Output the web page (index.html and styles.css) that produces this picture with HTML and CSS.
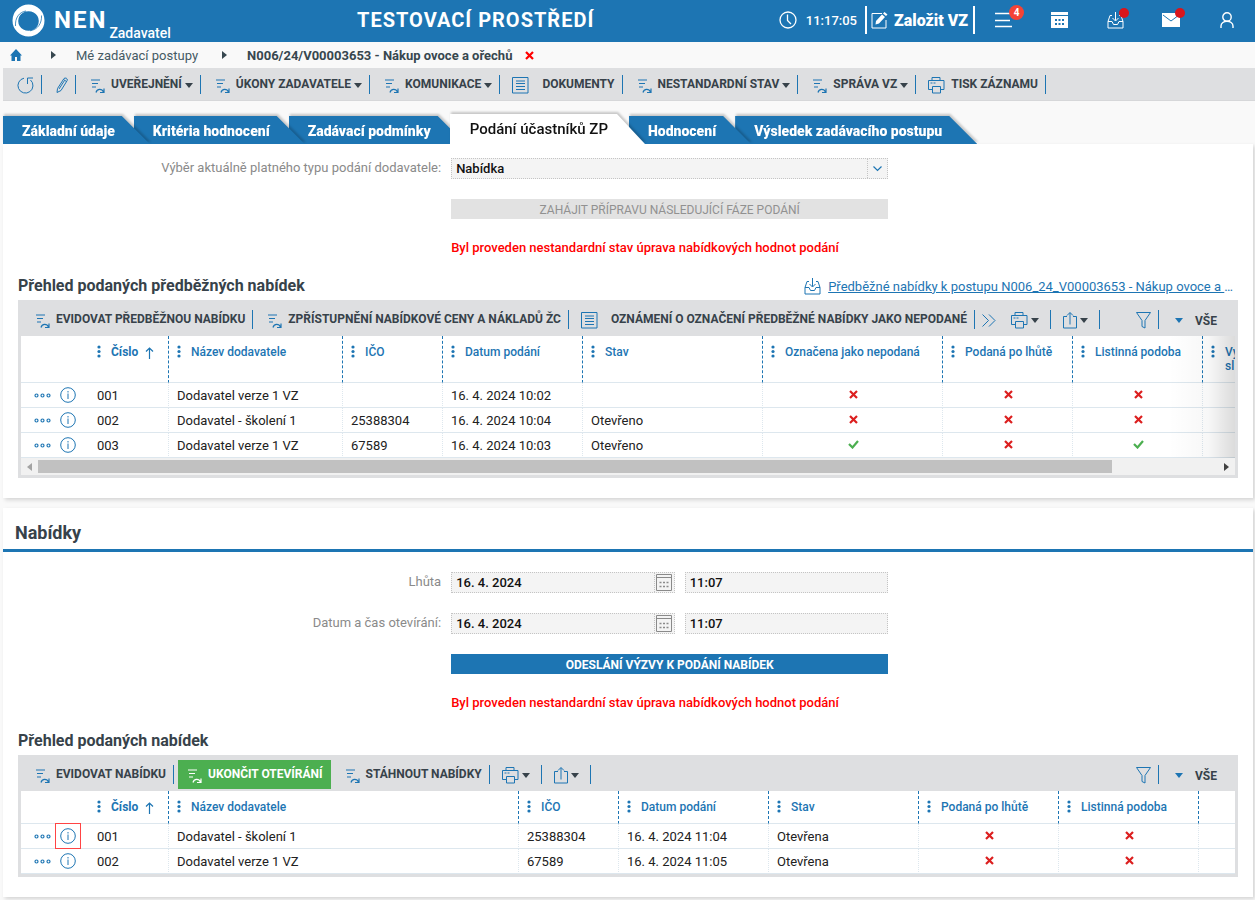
FILE: index.html
```html
<!DOCTYPE html>
<html lang="cs">
<head>
    <meta charset="UTF-8">
    <meta name="viewport" content="width=device-width, initial-scale=1.0">
    <title>NEN - Podání účastníků ZP</title>
    <link rel="stylesheet" href="styles.css">
</head>
<body>
    <!-- Icon sprite -->
    <svg class="sprite" aria-hidden="true">
        <symbol id="i-logo" viewBox="0 0 33 33">
            <path fill="currentColor" fill-rule="evenodd" d="M16.500 0.500a16 16 0 1 1 0 32a16 16 0 1 1 0-32zM16.500 7.200a10.300 9.800 0 1 0 .01 0z"/>
            <path fill="none" stroke="#1d75b3" stroke-width=".8" d="M3.500 22C3 14 7 8 14 7M29.500 11.500C30 19 26 25.500 18 26.800"/>
        </symbol>
        <symbol id="i-clock" viewBox="0 0 18 18">
            <g fill="none" stroke="currentColor" stroke-width="1.3"><circle cx="9" cy="9" r="8"/><path d="M8.500 3.500v6l3.500 3.500"/></g>
        </symbol>
        <symbol id="i-edit" viewBox="0 0 17 17">
            <path fill="none" stroke="currentColor" d="M11 1.500H1v14.500h14V8"/>
            <path fill="currentColor" d="M5 9l6-6.500 3 2.500-6 6.500-3.500 1zM12 1.500l1.500-1.500 3 2.500-1.500 1.500z"/>
        </symbol>
        <symbol id="i-menu" viewBox="0 0 17 16">
            <path fill="none" stroke="currentColor" stroke-width="1.500" d="M0 1.500h17M0 8.500h15M0 14.500h17"/>
        </symbol>
        <symbol id="i-cal-solid" viewBox="0 0 17 16">
            <path fill="currentColor" d="M0 0h17v3H0zM0 4h17v12H0z"/>
            <path stroke="#1d75b3" stroke-width="2" stroke-dasharray="2 1.500" d="M4 8h9M4 12h9"/>
        </symbol>
        <symbol id="i-inbox" viewBox="0 0 17 17">
            <path fill="none" stroke="currentColor" d="M5 3.500H3L1 9.500v6.500h15V9.500L14 3.500h-2M1 9.500h4l1.500 3h4l1.500-3h4M8.500 0v8.500M5.500 6l3 3 3-3"/>
        </symbol>
        <symbol id="i-mail" viewBox="0 0 18 14">
            <path fill="currentColor" d="M0 0h18v14H0z"/><path fill="none" stroke="#1d75b3" d="M1 2l8 6 8-6"/>
        </symbol>
        <symbol id="i-user" viewBox="0 0 14 16">
            <g fill="none" stroke="currentColor" stroke-width="1.400"><circle cx="7" cy="5" r="4.200"/><path d="M1 16v-2c0-3 3-4.800 6-4.800s6 1.800 6 4.800v2"/></g>
        </symbol>
        <symbol id="i-home" viewBox="0 0 12 12">
            <path fill="currentColor" d="M6 0l6 6.500h-1.500V12H7V8H5v4H1.500V6.500H0z"/>
        </symbol>
        <symbol id="i-cross" viewBox="0 0 9 9">
            <path fill="none" stroke="currentColor" stroke-width="2.200" d="M1 1l7 7M8 1L1 8"/>
        </symbol>
        <symbol id="i-check" viewBox="0 0 11 9">
            <path fill="none" stroke="currentColor" stroke-width="2.200" d="M1 4l3.500 3.500L10 1"/>
        </symbol>
        <symbol id="i-refresh" viewBox="0 0 17 17">
            <path fill="none" stroke="currentColor" d="M7 1.200A7.500 7.500 0 1 0 13.500 3M16 1h-5.500v6"/>
        </symbol>
        <symbol id="i-pencil" viewBox="0 0 12 17">
            <path fill="none" stroke="currentColor" d="M1 15.500l.5-4L8 1.500c1-1 4-.5 3.200 2L5 13.500zM3 12l5.500-8.500M7.500 2.500l3 2"/>
        </symbol>
        <symbol id="i-action" viewBox="0 0 14 14">
            <path fill="none" stroke="currentColor" stroke-width="1.200" d="M0 1h9M1 4.500h6M1 8h4M5 13.500c1-4 6-4 7.500-.5M13 9.500v4H9"/>
        </symbol>
        <symbol id="i-doc" viewBox="0 0 17 17">
            <path fill="none" stroke="currentColor" d="M.5.500h15.500v15.500H.5zM4 4h9M4 6.500h9M4 9.500h9M4 12.500h9"/>
        </symbol>
        <symbol id="i-print" viewBox="0 0 17 17">
            <path fill="none" stroke="currentColor" d="M4 3.500V.5h8v3M4 12.500H.5v-9H16v9h-3.500M4.500 9.500h8v6.500h-8zM2.500 6h2M5.500 6h2"/>
        </symbol>
        <symbol id="i-share" viewBox="0 0 14 17">
            <path fill="none" stroke="currentColor" d="M4 4.500H.5v11.500h13V4.500H10M7 12.500V.8M4 3.500l3-3 3 3"/>
        </symbol>
        <symbol id="i-filter" viewBox="0 0 15 17">
            <path fill="none" stroke="currentColor" d="M.5.500h14L9 8.500v7.500l-3-1.500v-6z"/>
        </symbol>
        <symbol id="i-more" viewBox="0 0 14 13">
            <path fill="none" stroke="currentColor" d="M.5.500l6 6-6 6M7 .5l6 6-6 6"/>
        </symbol>
        <symbol id="i-caret" viewBox="0 0 8 5"><path fill="currentColor" d="M0 0h8L4 5z"/></symbol>
        <symbol id="i-right" viewBox="0 0 5 8"><path fill="currentColor" d="M0 0l5 4-5 4z"/></symbol>
        <symbol id="i-left" viewBox="0 0 5 8"><path fill="currentColor" d="M5 0L0 4l5 4z"/></symbol>
        <symbol id="i-chevron" viewBox="0 0 9 6"><path fill="none" stroke="currentColor" stroke-width="1.200" d="M.5.500l4 4 4-4"/></symbol>
        <symbol id="i-grip" viewBox="0 0 4 13">
            <g fill="currentColor"><circle cx="2" cy="2" r="1.600"/><circle cx="2" cy="6.500" r="1.600"/><circle cx="2" cy="11" r="1.600"/></g>
        </symbol>
        <symbol id="i-up" viewBox="0 0 9 12"><path fill="none" stroke="currentColor" stroke-width="1.200" d="M4.500 12V1M1 4.500L4.500 1 8 4.500"/></symbol>
        <symbol id="i-dots" viewBox="0 0 17 5">
            <g fill="none" stroke="currentColor" stroke-width="1.200"><circle cx="2.500" cy="2.500" r="1.500"/><circle cx="8.500" cy="2.500" r="1.500"/><circle cx="14.500" cy="2.500" r="1.500"/></g>
        </symbol>
        <symbol id="i-info" viewBox="0 0 16 16">
            <circle cx="8" cy="8" r="7.300" fill="none" stroke="currentColor"/><path stroke="currentColor" d="M8 4v1.500M8 6.500v5.500"/>
        </symbol>
        <symbol id="i-cal" viewBox="0 0 16 17">
            <path fill="none" stroke="currentColor" d="M.5.500h15v16H.5zM.5 3.500h15"/>
            <path stroke="currentColor" stroke-width="1.500" stroke-dasharray="2 1.500" d="M3.500 8.500h9M3.500 12.500h9"/>
        </symbol>
    </svg>

    <header class="header">
        <div class="brand">
            <svg class="logo"><use href="#i-logo"/></svg>
            <span class="brand-name">NEN</span>
            <span class="brand-role">Zadavatel</span>
        </div>
        <div class="env">TESTOVACÍ PROSTŘEDÍ</div>
        <div class="clock"><svg width="18" height="18"><use href="#i-clock"/></svg>11:17:05</div>
        <button class="create"><svg width="17" height="17"><use href="#i-edit"/></svg>Založit VZ</button>
        <nav class="header-icons">
            <button aria-label="Nabídka"><svg width="17" height="16"><use href="#i-menu"/></svg><span class="badge">4</span></button>
            <button aria-label="Kalendář"><svg width="17" height="16"><use href="#i-cal-solid"/></svg></button>
            <button aria-label="Doručené"><svg width="17" height="17"><use href="#i-inbox"/></svg><span class="dot"></span></button>
            <button aria-label="Zprávy"><svg width="18" height="14"><use href="#i-mail"/></svg><span class="dot"></span></button>
            <button aria-label="Uživatel"><svg width="14" height="16"><use href="#i-user"/></svg></button>
        </nav>
    </header>

    <nav class="breadcrumb">
        <a class="home" href="#" aria-label="Domů"><svg width="12" height="12"><use href="#i-home"/></svg></a>
        <svg class="sep" width="5" height="8"><use href="#i-right"/></svg>
        <a href="#">Mé zadávací postupy</a>
        <svg class="sep" width="5" height="8"><use href="#i-right"/></svg>
        <strong>N006/24/V00003653 - Nákup ovoce a ořechů</strong>
        <button class="close" aria-label="Zavřít"><svg width="9" height="9"><use href="#i-cross"/></svg></button>
    </nav>

    <div class="toolbar main-toolbar">
        <button class="tool icon-only" aria-label="Obnovit"><svg width="17" height="17"><use href="#i-refresh"/></svg></button>
        <button class="tool icon-only" aria-label="Upravit"><svg width="12" height="17"><use href="#i-pencil"/></svg></button>
        <button class="tool"><svg width="14" height="14"><use href="#i-action"/></svg>UVEŘEJNĚNÍ<svg class="caret"><use href="#i-caret"/></svg></button>
        <button class="tool"><svg width="14" height="14"><use href="#i-action"/></svg>ÚKONY ZADAVATELE<svg class="caret"><use href="#i-caret"/></svg></button>
        <button class="tool"><svg width="14" height="14"><use href="#i-action"/></svg>KOMUNIKACE<svg class="caret"><use href="#i-caret"/></svg></button>
        <button class="tool doc"><svg width="17" height="17"><use href="#i-doc"/></svg>DOKUMENTY</button>
        <button class="tool"><svg width="14" height="14"><use href="#i-action"/></svg>NESTANDARDNÍ STAV<svg class="caret"><use href="#i-caret"/></svg></button>
        <button class="tool"><svg width="14" height="14"><use href="#i-action"/></svg>SPRÁVA VZ<svg class="caret"><use href="#i-caret"/></svg></button>
        <button class="tool print"><svg width="17" height="17"><use href="#i-print"/></svg>TISK ZÁZNAMU</button>
    </div>

    <ul class="tabs">
        <li><a href="#">Základní údaje</a></li>
        <li><a href="#">Kritéria hodnocení</a></li>
        <li><a href="#">Zadávací podmínky</a></li>
        <li class="active"><a href="#">Podání účastníků ZP</a></li>
        <li><a href="#">Hodnocení</a></li>
        <li><a href="#">Výsledek zadávacího postupu</a></li>
    </ul>

    <section class="panel first">
        <div class="form">
            <label for="typ">Výběr aktuálně platného typu podání dodavatele:</label>
            <div class="field select-field">
                <select id="typ"><option>Nabídka</option></select>
                <span class="field-icon"><svg width="9" height="6"><use href="#i-chevron"/></svg></span>
            </div>
            <button class="wide" disabled>ZAHÁJIT PŘÍPRAVU NÁSLEDUJÍCÍ FÁZE PODÁNÍ</button>
            <p class="alert">Byl proveden nestandardní stav úprava nabídkových hodnot podání</p>
        </div>

        <div class="block-head">
            <h3>Přehled podaných předběžných nabídek</h3>
            <a class="download" href="#"><svg width="17" height="17"><use href="#i-inbox"/></svg><span><u>Předběžné nabídky k postupu N006_24_V00003653 - Nákup ovoce a </u>…</span></a>
        </div>
        <div class="grid">
            <div class="toolbar">
                <button class="tool"><svg width="14" height="14"><use href="#i-action"/></svg>EVIDOVAT PŘEDBĚŽNOU NABÍDKU</button>
                <button class="tool"><svg width="14" height="14"><use href="#i-action"/></svg>ZPŘÍSTUPNĚNÍ NABÍDKOVÉ CENY A NÁKLADŮ ŽC</button>
                <button class="tool doc"><svg width="17" height="17"><use href="#i-doc"/></svg>OZNÁMENÍ O OZNAČENÍ PŘEDBĚŽNÉ NABÍDKY JAKO NEPODANÉ</button>
                <button class="tool more" aria-label="Další"><svg width="14" height="13"><use href="#i-more"/></svg></button>
                <button class="tool menu" aria-label="Tisk"><svg width="17" height="17"><use href="#i-print"/></svg><svg class="caret"><use href="#i-caret"/></svg></button>
                <button class="tool menu" aria-label="Export"><svg width="14" height="17"><use href="#i-share"/></svg><svg class="caret"><use href="#i-caret"/></svg></button>
                <div class="filters">
                    <button class="tool filter" aria-label="Filtr"><svg width="15" height="17"><use href="#i-filter"/></svg></button>
                    <button class="all"><svg class="caret"><use href="#i-caret"/></svg>VŠE</button>
                </div>
            </div>
            <div class="table-wrap fade">
                <table class="wide-table">
                    <colgroup><col class="c68"><col class="c80"><col class="c174"><col class="c100"><col class="c140"><col class="c180"><col class="c180"><col class="c130"><col class="c130"><col class="c140"></colgroup>
                    <thead class="tall">
                        <tr>
                            <th class="plain"></th>
                            <th><svg class="grip"><use href="#i-grip"/></svg><b>Číslo</b><svg class="up"><use href="#i-up"/></svg></th>
                            <th><svg class="grip"><use href="#i-grip"/></svg>Název dodavatele</th>
                            <th><svg class="grip"><use href="#i-grip"/></svg>IČO</th>
                            <th><svg class="grip"><use href="#i-grip"/></svg>Datum podání</th>
                            <th><svg class="grip"><use href="#i-grip"/></svg>Stav</th>
                            <th><svg class="grip"><use href="#i-grip"/></svg>Označena jako nepodaná</th>
                            <th><svg class="grip"><use href="#i-grip"/></svg>Podaná po lhůtě</th>
                            <th><svg class="grip"><use href="#i-grip"/></svg>Listinná podoba</th>
                            <th><svg class="grip"><use href="#i-grip"/></svg>Vy<br>sl</th>
                        </tr>
                    </thead>
                    <tbody>
                        <tr>
                            <td class="actions"><button aria-label="Akce"><svg width="17" height="5"><use href="#i-dots"/></svg></button><button aria-label="Detail"><svg width="16" height="16"><use href="#i-info"/></svg></button></td>
                            <td>001</td><td>Dodavatel verze 1 VZ</td><td></td><td>16. 4. 2024 10:02</td><td></td>
                            <td class="flag"><svg class="no"><use href="#i-cross"/></svg></td>
                            <td class="flag"><svg class="no"><use href="#i-cross"/></svg></td>
                            <td class="flag"><svg class="no"><use href="#i-cross"/></svg></td>
                            <td></td>
                        </tr>
                        <tr>
                            <td class="actions"><button aria-label="Akce"><svg width="17" height="5"><use href="#i-dots"/></svg></button><button aria-label="Detail"><svg width="16" height="16"><use href="#i-info"/></svg></button></td>
                            <td>002</td><td>Dodavatel - školení 1</td><td>25388304</td><td>16. 4. 2024 10:04</td><td>Otevřeno</td>
                            <td class="flag"><svg class="no"><use href="#i-cross"/></svg></td>
                            <td class="flag"><svg class="no"><use href="#i-cross"/></svg></td>
                            <td class="flag"><svg class="no"><use href="#i-cross"/></svg></td>
                            <td></td>
                        </tr>
                        <tr>
                            <td class="actions"><button aria-label="Akce"><svg width="17" height="5"><use href="#i-dots"/></svg></button><button aria-label="Detail"><svg width="16" height="16"><use href="#i-info"/></svg></button></td>
                            <td>003</td><td>Dodavatel verze 1 VZ</td><td>67589</td><td>16. 4. 2024 10:03</td><td>Otevřeno</td>
                            <td class="flag"><svg class="yes"><use href="#i-check"/></svg></td>
                            <td class="flag"><svg class="no"><use href="#i-cross"/></svg></td>
                            <td class="flag"><svg class="yes"><use href="#i-check"/></svg></td>
                            <td></td>
                        </tr>
                    </tbody>
                </table>
            </div>
            <div class="scrollbar">
                <svg class="off" width="5" height="8"><use href="#i-left"/></svg>
                <div class="track"><div class="thumb"></div></div>
                <svg width="5" height="8"><use href="#i-right"/></svg>
            </div>
        </div>
    </section>

    <section class="panel">
        <h2>Nabídky</h2>
        <div class="form">
            <label for="lhuta">Lhůta</label>
            <div class="pair">
                <div class="field date-field">
                    <input id="lhuta" type="text" value="16. 4. 2024">
                    <span class="field-icon"><svg width="16" height="17"><use href="#i-cal"/></svg></span>
                </div>
                <div class="field"><input type="text" value="11:07" aria-label="Lhůta - čas"></div>
            </div>
            <label for="otevirani">Datum a čas otevírání:</label>
            <div class="pair">
                <div class="field date-field">
                    <input id="otevirani" type="text" value="16. 4. 2024">
                    <span class="field-icon"><svg width="16" height="17"><use href="#i-cal"/></svg></span>
                </div>
                <div class="field"><input type="text" value="11:07" aria-label="Čas otevírání"></div>
            </div>
            <button class="wide">ODESLÁNÍ VÝZVY K PODÁNÍ NABÍDEK</button>
            <p class="alert">Byl proveden nestandardní stav úprava nabídkových hodnot podání</p>
        </div>

        <div class="block-head">
            <h3>Přehled podaných nabídek</h3>
        </div>
        <div class="grid">
            <div class="toolbar">
                <button class="tool"><svg width="14" height="14"><use href="#i-action"/></svg>EVIDOVAT NABÍDKU</button>
                <button class="tool green"><svg width="14" height="14"><use href="#i-action"/></svg>UKONČIT OTEVÍRÁNÍ</button>
                <button class="tool"><svg width="14" height="14"><use href="#i-action"/></svg>STÁHNOUT NABÍDKY</button>
                <button class="tool menu" aria-label="Tisk"><svg width="17" height="17"><use href="#i-print"/></svg><svg class="caret"><use href="#i-caret"/></svg></button>
                <button class="tool menu" aria-label="Export"><svg width="14" height="17"><use href="#i-share"/></svg><svg class="caret"><use href="#i-caret"/></svg></button>
                <div class="filters">
                    <button class="tool filter" aria-label="Filtr"><svg width="15" height="17"><use href="#i-filter"/></svg></button>
                    <button class="all"><svg class="caret"><use href="#i-caret"/></svg>VŠE</button>
                </div>
            </div>
            <div class="table-wrap">
                <table>
                    <colgroup><col class="c68"><col class="c80"><col class="c350"><col class="c100"><col class="c150"><col class="c150"><col class="c140"><col class="c140"><col></colgroup>
                    <thead>
                        <tr>
                            <th class="plain"></th>
                            <th><svg class="grip"><use href="#i-grip"/></svg><b>Číslo</b><svg class="up"><use href="#i-up"/></svg></th>
                            <th><svg class="grip"><use href="#i-grip"/></svg>Název dodavatele</th>
                            <th><svg class="grip"><use href="#i-grip"/></svg>IČO</th>
                            <th><svg class="grip"><use href="#i-grip"/></svg>Datum podání</th>
                            <th><svg class="grip"><use href="#i-grip"/></svg>Stav</th>
                            <th><svg class="grip"><use href="#i-grip"/></svg>Podaná po lhůtě</th>
                            <th><svg class="grip"><use href="#i-grip"/></svg>Listinná podoba</th>
                            <th class="plain"></th>
                        </tr>
                    </thead>
                    <tbody>
                        <tr>
                            <td class="actions"><button aria-label="Akce"><svg width="17" height="5"><use href="#i-dots"/></svg></button><button class="marked" aria-label="Detail"><svg width="16" height="16"><use href="#i-info"/></svg></button></td>
                            <td>001</td><td>Dodavatel - školení 1</td><td>25388304</td><td>16. 4. 2024 11:04</td><td>Otevřena</td>
                            <td class="flag"><svg class="no"><use href="#i-cross"/></svg></td>
                            <td class="flag"><svg class="no"><use href="#i-cross"/></svg></td>
                            <td class="last"></td>
                        </tr>
                        <tr>
                            <td class="actions"><button aria-label="Akce"><svg width="17" height="5"><use href="#i-dots"/></svg></button><button aria-label="Detail"><svg width="16" height="16"><use href="#i-info"/></svg></button></td>
                            <td>002</td><td>Dodavatel verze 1 VZ</td><td>67589</td><td>16. 4. 2024 11:05</td><td>Otevřena</td>
                            <td class="flag"><svg class="no"><use href="#i-cross"/></svg></td>
                            <td class="flag"><svg class="no"><use href="#i-cross"/></svg></td>
                            <td class="last"></td>
                        </tr>
                    </tbody>
                </table>
            </div>
        </div>
    </section>
</body>
</html>
```
FILE: styles.css
```css
* {
    box-sizing: border-box;
}
body {
    margin: 0;
    background: #f9f9f9;
    color: #212121;
    font-family: Roboto, 'Liberation Sans', sans-serif;
    font-size: 13px;
}
.sprite {
    display: none;
}
svg {
    display: block;
    flex: none;
}
button {
    font-family: inherit;
    background: none;
    border: none;
    padding: 0;
    cursor: pointer;
}

/* Header */
.header {
    display: flex;
    align-items: center;
    height: 42px;
    padding-bottom: 2px;
    background: #1d75b3;
    color: white;
}
.brand {
    display: flex;
    align-items: center;
    width: 357px;
    padding-left: 12px;
}
.logo {
    width: 33px;
    height: 33px;
    margin-right: 9px;
}
.brand-name {
    font-size: 24px;
    font-weight: 700;
    letter-spacing: 2px;
    line-height: 42px;
}
.brand-role {
    margin-left: 2px;
    font-size: 14px;
    font-weight: 500;
    line-height: 16px;
    align-self: flex-end;
}
.env {
    font-size: 20px;
    font-weight: 700;
    line-height: 40px;
    letter-spacing: 1px;
}
.clock {
    display: flex;
    align-items: center;
    gap: 9px;
    margin-left: auto;
    margin-right: 8px;
    font-weight: 500;
}
.create {
    display: flex;
    align-items: center;
    gap: 6px;
    height: 28px;
    padding: 0 5px 0 4px;
    border-left: 2px solid white;
    border-right: 2px solid white;
    color: white;
    font-size: 16px;
    font-weight: 900;
}
.header-icons {
    display: flex;
}
.header-icons button {
    position: relative;
    display: flex;
    align-items: center;
    justify-content: center;
    width: 56px;
    height: 42px;
    color: white;
}
.badge {
    position: absolute;
    top: 6px;
    left: 34px;
    width: 15px;
    height: 15px;
    border-radius: 50%;
    background: #f44336;
    font-size: 10px;
    font-weight: 700;
    line-height: 15px;
}
.dot {
    position: absolute;
    top: 9px;
    left: 32px;
    width: 10px;
    height: 10px;
    border-radius: 50%;
    background: #d9151b;
}

/* Breadcrumb */
.breadcrumb {
    display: flex;
    align-items: center;
    height: 26px;
    padding-left: 10px;
    color: #37474f;
}
.breadcrumb a {
    color: #455a64;
    text-decoration: none;
}
.breadcrumb .home {
    color: #1d75b3;
    margin-right: 5px;
}
.breadcrumb .sep {
    margin: 0 20px 0 24px;
}
.breadcrumb strong {
    font-weight: 700;
}
.breadcrumb .close {
    margin-left: 13px;
    color: #f00;
}

/* Toolbars */
.toolbar {
    display: flex;
    align-items: center;
    height: 36px;
    background: #dedfe1;
}
.main-toolbar {
    height: 33px;
    margin-left: 3px;
    border-bottom: 1px solid #d6d7d9;
}
.grid .toolbar {
    padding-top: 2px;
}
.tool {
    display: flex;
    align-items: center;
    height: 19px;
    padding: 0 7px 0 15px;
    border-right: 1px solid #1d75b3;
    color: #37424a;
    font-size: 12px;
    font-weight: 700;
    white-space: nowrap;
}
.tool svg {
    margin-right: 6px;
    margin-top: 3px;
    color: #1d75b3;
}
.tool .caret {
    margin: 2px 0 0 3px;
    color: #37424a;
}
.caret {
    width: 8px;
    height: 5px;
}
.tool.icon-only {
    padding-left: 14px;
}
.tool.icon-only svg {
    margin-right: 0;
}
.tool.doc {
    padding-left: 12px;
}
.tool.doc svg {
    margin-right: 13px;
}
.tool.print {
    padding-left: 12px;
}
.tool.more {
    padding: 0 8px 0 7px;
    border-right: none;
}
.tool.more svg {
    margin-right: 0;
}
.tool.menu {
    padding-left: 12px;
    padding-right: 11px;
}
.tool.menu svg:first-child {
    margin-right: 0;
}
.tool.more + .menu {
    padding-left: 7px;
}
.tool.green {
    height: 29px;
    margin-left: 4px;
    padding: 0 8px 0 10px;
    border-right: none;
    background: #4caf50;
    color: white;
}
.tool.green svg {
    color: white;
}
.filters {
    display: flex;
    align-items: center;
    margin-left: auto;
    padding-right: 18px;
}
.tool.filter svg {
    margin-right: 0;
}
.all {
    display: flex;
    align-items: center;
    gap: 12px;
    padding-left: 16px;
    padding-top: 3px;
    color: #37424a;
    font-size: 12px;
    font-weight: 700;
}
.all svg {
    color: #1d75b3;
}

/* Tabs */
.tabs {
    display: flex;
    align-items: flex-end;
    height: 43px;
    margin: 0;
    padding: 0 0 0 3px;
    list-style: none;
}
.tabs li {
    position: relative;
    margin-right: -16px;
    filter: drop-shadow(1px -2px 1px rgba(0,0,0,0.2));
}
.tabs a {
    display: block;
    height: 28px;
    padding: 0 35px 0 19px;
    background: #1d75b3;
    clip-path: polygon(0 0, calc(100% - 28px) 0, 100% 100%, 0 100%);
    color: white;
    font-size: 14px;
    font-weight: 900;
    line-height: 31px;
    text-decoration: none;
    white-space: nowrap;
}
.tabs li:nth-child(1) { z-index: 5; }
.tabs li:nth-child(2) { z-index: 4; }
.tabs li:nth-child(3) { z-index: 3; }
.tabs li:nth-child(4) { z-index: 6; }
.tabs li:nth-child(5) { z-index: 2; }
.tabs .active a {
    height: 30px;
    padding: 0 37px 0 20px;
    background: white;
    color: #111;
    font-size: 15px;
    font-weight: 500;
    line-height: 30px;
}

/* Panels */
.panel {
    margin: 0 2px 10px 3px;
    padding-bottom: 20px;
    background: white;
    box-shadow: 2px 2px 4px rgba(0,0,0,0.15);
}
.panel.first {
    padding-top: 14px;
}
.panel:last-child {
    margin-bottom: 3px;
}
h2 {
    margin: 0 0 20px;
    padding: 13px 12px 4px;
    border-bottom: 3px solid #1d75b3;
    color: #37424a;
    font-size: 18px;
    font-weight: 700;
    line-height: 24px;
}
h3 {
    margin: 0;
    color: #37424a;
    font-size: 16px;
    font-weight: 700;
    line-height: 20px;
}

/* Forms */
.form {
    display: grid;
    grid-template-columns: 35% 35%;
    gap: 20px 10px;
    padding-left: 1px;
}
.form label {
    color: #8a8a8a;
    line-height: 20px;
    text-align: right;
}
.form .wide,
.form .alert {
    grid-column: 2;
}
.field {
    display: flex;
    height: 21px;
    border: 1px dotted #c4c4c4;
    background: #f4f4f4;
}
.field input,
.field select {
    flex: 1;
    min-width: 0;
    padding: 0 4px;
    border: none;
    outline: none;
    background: none;
    appearance: none;
    color: #111;
    font-family: inherit;
    font-size: 13px;
    font-weight: 500;
}
.field-icon {
    display: flex;
    align-items: center;
    justify-content: center;
    width: 20px;
    border-left: 1px dotted #c4c4c4;
    color: #8a8a8a;
}
.select-field .field-icon {
    color: #1d75b3;
}
.pair {
    display: grid;
    grid-template-columns: 224fr 204fr;
    gap: 10px;
}
.wide {
    height: 20px;
    padding-top: 2px;
    background: #1d75b3;
    color: white;
    font-size: 12px;
    font-weight: 700;
}
.wide:disabled {
    background: #e2e2e2;
    color: #919191;
    font-weight: 400;
}
.alert {
    margin: 0;
    color: #f00;
    font-weight: 500;
    line-height: 18px;
}

/* Grids */
.block-head {
    display: flex;
    justify-content: space-between;
    align-items: center;
    margin-top: 19px;
    margin-bottom: 4px;
    padding: 0 20px 0 15px;
}
.download {
    display: flex;
    align-items: center;
    gap: 7px;
    color: #1d75b3;
    text-decoration: none;
    white-space: pre;
}
.grid {
    margin: 0 15px;
    border: 3px solid #dedfe1;
    border-top: none;
}
.table-wrap {
    position: relative;
    overflow: hidden;
}
.fade::after {
    content: '';
    position: absolute;
    top: 0;
    right: 0;
    bottom: 0;
    width: 66px;
    background: linear-gradient(to right, rgba(0,0,0,0), rgba(0,0,0,0.03) 60%, rgba(0,0,0,0.14));
}
table {
    width: 100%;
    table-layout: fixed;
    border-spacing: 0;
    background: white;
}
.wide-table {
    width: 1322px;
}
.c68 { width: 68px; }
.c80 { width: 80px; }
.c100 { width: 100px; }
.c130 { width: 130px; }
.c140 { width: 140px; }
.c150 { width: 150px; }
.c174 { width: 174px; }
.c180 { width: 180px; }
.c350 { width: 350px; }
th {
    position: relative;
    height: 33px;
    padding: 9px 0 0 22px;
    border-right: 1px dashed #1d75b3;
    border-bottom: 1px solid #dde7ee;
    color: #1d75b3;
    font-size: 12px;
    font-weight: 500;
    line-height: 14px;
    text-align: left;
    vertical-align: top;
    white-space: nowrap;
}
.tall th {
    height: 47px;
}
th.plain {
    border-right: none;
}
.grip {
    position: absolute;
    top: 9px;
    left: 8px;
    width: 4px;
    height: 13px;
}
.up {
    display: inline-block;
    width: 9px;
    height: 12px;
    margin-left: 7px;
    vertical-align: -3px;
}
td {
    height: 25px;
    padding: 0 8px;
    border-right: 1px dotted #dde7ee;
    border-bottom: 1px solid #dde7ee;
    white-space: nowrap;
}
td.actions {
    padding: 0 0 0 13px;
    border-right: none;
}
td.last {
    border-right: none;
}
.actions button {
    display: inline-block;
    margin-right: 9px;
    vertical-align: middle;
    color: #1d75b3;
}
.actions button + button {
    margin: 0;
}
.actions .marked {
    position: relative;
    z-index: 1;
    outline: 1px solid #f44;
    outline-offset: 4px;
}
td.flag {
    padding: 0 7px 0 9px;
}
.flag svg {
    width: 11px;
    height: 9px;
    margin: 0 auto 2px;
}
.no {
    color: #dc1f1f;
}
.yes {
    color: #4caf50;
}
.scrollbar {
    display: flex;
    align-items: center;
    height: 17px;
    padding: 0 6px;
    background: #f1f1f1;
    color: #424242;
}
.scrollbar .off {
    color: #a3a3a3;
}
.track {
    flex: 1;
    margin: 0 6px;
}
.thumb {
    width: 91%;
    height: 13px;
    background: #c1c1c1;
}
```
